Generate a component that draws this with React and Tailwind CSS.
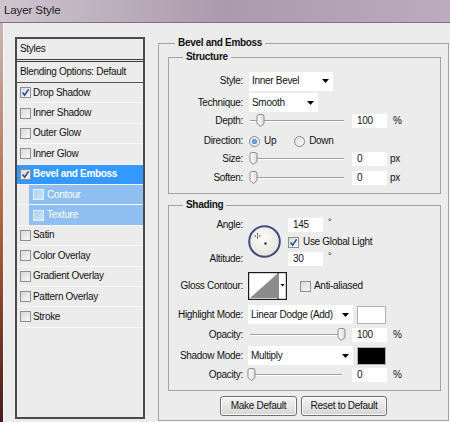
import React from "react";

const FONT = "font-['Liberation_Sans',Arial,sans-serif]";

function Check({ checked, tone = "normal" }) {
  const box =
    tone === "sub"
      ? "border-[#e8f2fd] bg-linear-to-br from-[#a9d0f5] to-[#cfe5fa]"
      : "border-[#8e8f8f] bg-linear-to-br from-[#d9d9d9] to-[#f7f7f7]";
  return (
    <span className={`w-[11px] h-[11px] border ${box} flex items-center justify-center shrink-0`}>
      {checked && (
        <svg viewBox="0 0 9 9" className="w-[9px] h-[9px]">
          <path d="M1.6 4.6 L3.6 7.2 L7.6 1.4" stroke="#2c4a9c" strokeWidth="1.6" fill="none" />
        </svg>
      )}
    </span>
  );
}

function Arrow() {
  return (
    <svg viewBox="0 0 7 4" className="w-[7px] h-[4px] shrink-0">
      <path d="M0 0 H7 L3.5 4 Z" fill="#000" />
    </svg>
  );
}

function Dropdown({ text, w }) {
  return (
    <div className={`${w} h-[19px] bg-white flex items-center justify-between pl-[3px] pr-[4px]`}>
      <span>{text}</span>
      <Arrow />
    </div>
  );
}

function Thumb() {
  return (
    <svg viewBox="0 0 9 13" className="w-[9px] h-[13px]">
      <defs>
        <linearGradient id="tg" x1="0" x2="1">
          <stop offset="0" stopColor="#ffffff" />
          <stop offset="1" stopColor="#dcdcdc" />
        </linearGradient>
      </defs>
      <path d="M1 2.5 Q1 0.5 3 0.5 H6 Q8 0.5 8 2.5 V9.5 L4.5 12.5 L1 9.5 Z" fill="url(#tg)" stroke="#8a8a8a" strokeWidth="1" />
    </svg>
  );
}

function Slider({ pos }) {
  return (
    <div className="relative w-[95px] h-[14px]">
      <div className="absolute left-[1px] right-0 top-[6px] h-[2px] border-t border-[#9e9e9e] border-b border-b-white bg-[#d8d8d8]" />
      <div className="absolute top-[0px]" style={{ left: pos }}>
        <Thumb />
      </div>
    </div>
  );
}

function NumInput({ v }) {
  return (
    <div className="w-[35px] h-[14px] bg-white flex items-center pl-[5px] text-[10px]">{v}</div>
  );
}

function Radio({ on }) {
  return (
    <span className="w-[11px] h-[11px] rounded-full border border-[#8a8a8a] bg-linear-to-br from-[#dedede] to-[#fafafa] flex items-center justify-center shrink-0">
      {on && <span className="w-[5px] h-[5px] rounded-full bg-radial from-[#7cc4f5] to-[#1f5fa8]" />}
    </span>
  );
}

function Label({ children }) {
  return <span className="w-[74px] text-right shrink-0">{children}</span>;
}

function Button({ children, w }) {
  return (
    <div className={`${w} h-[20px] rounded-[3px] border border-[#707070] bg-linear-to-b from-[#f4f4f4] via-[#e6e6e6] to-[#d4d4d4] shadow-[inset_0_0_0_1px_#fcfcfc] flex items-center justify-center`}>
      {children}
    </div>
  );
}

const items = [
  { t: "Drop Shadow", c: true },
  { t: "Inner Shadow" },
  { t: "Outer Glow" },
  { t: "Inner Glow" },
  { t: "Bevel and Emboss", c: true, sel: true },
  { t: "Contour", sub: true },
  { t: "Texture", sub: true },
  { t: "Satin" },
  { t: "Color Overlay" },
  { t: "Gradient Overlay" },
  { t: "Pattern Overlay" },
  { t: "Stroke" },
];

function StyleList() {
  return (
    <div className="ml-[11px] w-[130px] h-[382px] border-2 border-[#4b4b4b] bg-[#ececec] flex flex-col shrink-0">
      <div className="h-[23px] flex items-center pl-[3px] border-b-[3px] border-double border-[#3a3a3a]">Styles</div>
      <div className="h-[21px] flex items-center pl-[3px] border-b border-[#555]">Blending Options: Default</div>
      {items.map((it) =>
        it.sub ? (
          <div key={it.t} className="h-[20.4px] flex border-b border-[#f8f8f8]">
            <div className="w-[12px] shrink-0" />
            <div className="flex-1 bg-[#8fbff0] flex items-center pl-[4px] gap-[3px] text-white">
              <Check tone="sub" />
              <span>{it.t}</span>
            </div>
          </div>
        ) : (
          <div
            key={it.t}
            className={`h-[20.4px] flex items-center pl-[3px] gap-[2px] border-b ${
              it.sel ? "bg-[#3399ff] text-white font-bold border-[#f8f8f8]" : "border-[#f8f8f8]"
            }`}
          >
            <Check checked={it.c} />
            <span>{it.t}</span>
          </div>
        )
      )}
    </div>
  );
}

function AngleDial() {
  return (
    <svg viewBox="0 0 33 33" className="w-[33px] h-[33px]">
      <defs>
        <radialGradient id="dg" cx="0.45" cy="0.4" r="0.6">
          <stop offset="0" stopColor="#fdfcf9" />
          <stop offset="1" stopColor="#e7e4dc" />
        </radialGradient>
      </defs>
      <circle cx="16.5" cy="16.5" r="15.3" fill="url(#dg)" stroke="#3f4d7f" strokeWidth="2" />
      <g fill="#333">
        <rect x="9" y="8" width="1" height="1.5" />
        <rect x="9" y="12" width="1" height="1.5" />
        <rect x="6.5" y="10.5" width="1.5" height="1" />
        <rect x="11" y="10.5" width="1.5" height="1" />
        <rect x="9" y="10.5" width="1" height="1" />
      </g>
      <rect x="16.5" y="17.5" width="2" height="2" fill="#000" />
    </svg>
  );
}

function GlossContour() {
  return (
    <svg viewBox="0 0 39 28" className="w-[39px] h-[28px]">
      <rect x="0.5" y="0.5" width="38" height="27" fill="#fff" stroke="#1a1a1a" strokeWidth="1.4" />
      <polygon points="2,26 29,2 29,26" fill="#8c8c8c" />
      <line x1="30" y1="0.5" x2="30" y2="27.5" stroke="#1a1a1a" strokeWidth="1" />
      <path d="M32.5 12 H36.5 L34.5 14.5 Z" fill="#000" />
    </svg>
  );
}

export default function App() {
  return (
    <div className={`w-[450px] h-[422px] overflow-hidden flex flex-col text-[10px] leading-none tracking-[-0.3px] text-[#111] ${FONT}`}>
      {/* title bar */}
      <div className="h-[23px] shrink-0 bg-linear-to-r from-[#cfc5cf] via-[#ab99ad] to-[#bcaabe] border-b border-[#7e7280] flex items-center pl-[4px]">
        <span className="text-[11.5px] text-[#1b1b1b] tracking-[-0.1px]">Layer Style</span>
      </div>
      <div className="flex flex-1 min-h-0">
        <div className="w-[3px] shrink-0 bg-linear-to-b from-[#c8b6b6] via-[#b0623c] to-[#4a1b1b]" />
        <div className="flex-1 bg-[#ececec] flex pt-[14px] border-l border-[#f7f7f7]">
          <StyleList />
          <fieldset className="ml-[13px] -mt-[1px] w-[291px] self-start border border-[#a3a3a3] px-0 pb-[4px] shadow-[1px_1px_0_#fafafa]">
            <legend className="ml-[16px] px-[3px] h-[14px] leading-[14px] font-bold text-[10px]">Bevel and Emboss</legend>
            {/* Structure */}
            <fieldset className="ml-[9px] w-[273px] border border-[#a3a3a3] pt-[7px] pb-[6px]">
              <legend className="ml-[14px] px-[3px] h-[14px] leading-[14px] font-bold">Structure</legend>
              <div className="flex items-center h-[20px]">
                <Label>Style:</Label>
                <div className="ml-[6px]">
                  <Dropdown text="Inner Bevel" w="w-[84px]" />
                </div>
              </div>
              <div className="flex items-center h-[19px] mt-[2px]">
                <Label>Technique:</Label>
                <div className="ml-[6px]">
                  <Dropdown text="Smooth" w="w-[69px]" />
                </div>
              </div>
              <div className="flex items-center h-[18px]">
                <Label>Depth:</Label>
                <div className="ml-[6px]">
                  <Slider pos={7} />
                </div>
                <div className="ml-[8px]">
                  <NumInput v="100" />
                </div>
                <span className="ml-[6px]">%</span>
              </div>
              <div className="flex items-center h-[18px] mt-[2px]">
                <Label>Direction:</Label>
                <div className="ml-[6px] flex items-center">
                  <Radio on />
                  <span className="ml-[4px]">Up</span>
                  <span className="ml-[18px]">
                    <Radio />
                  </span>
                  <span className="ml-[4px]">Down</span>
                </div>
              </div>
              <div className="flex items-center h-[18px]">
                <Label>Size:</Label>
                <div className="ml-[6px]">
                  <Slider pos={0} />
                </div>
                <div className="ml-[8px]">
                  <NumInput v="0" />
                </div>
                <span className="ml-[3px]">px</span>
              </div>
              <div className="flex items-center h-[18px] mt-[1px]">
                <Label>Soften:</Label>
                <div className="ml-[6px]">
                  <Slider pos={0} />
                </div>
                <div className="ml-[8px]">
                  <NumInput v="0" />
                </div>
                <span className="ml-[3px]">px</span>
              </div>
            </fieldset>
            {/* Shading */}
            <fieldset className="ml-[9px] mt-[4px] w-[273px] border border-[#a3a3a3] pt-[6px] pb-[6px]">
              <legend className="ml-[14px] px-[3px] h-[14px] leading-[14px] font-bold">Shading</legend>
              <div className="grid grid-cols-[74px_35px_1fr] grid-rows-[14px_20px_14px] gap-x-[5px]">
                <span className="text-right self-center">Angle:</span>
                <div className="row-span-3 mt-[7px]">
                  <AngleDial />
                </div>
                <div className="flex items-center">
                  <NumInput v="145" />
                  <span className="ml-[5px] self-start text-[9px]">°</span>
                </div>
                <span />
                <div className="flex items-center">
                  <Check checked />
                  <span className="ml-[4px]">Use Global Light</span>
                </div>
                <span className="text-right self-center">Altitude:</span>
                <div className="flex items-center">
                  <NumInput v="30" />
                  <span className="ml-[5px] self-start text-[9px]">°</span>
                </div>
              </div>
              <div className="flex items-center h-[28px] mt-[6px]">
                <Label>Gloss Contour:</Label>
                <div className="ml-[5px]">
                  <GlossContour />
                </div>
                <span className="ml-[13px]">
                  <Check />
                </span>
                <span className="ml-[3px]">Anti-aliased</span>
              </div>
              <div className="flex items-center h-[19px] mt-[5px]">
                <Label>Highlight Mode:</Label>
                <div className="ml-[5px]">
                  <Dropdown text="Linear Dodge (Add)" w="w-[105px]" />
                </div>
                <div className="ml-[4px] w-[29px] h-[18px] bg-white border border-[#b0b0b0]" />
              </div>
              <div className="flex items-center h-[18px] mt-[2px]">
                <Label>Opacity:</Label>
                <div className="ml-[6px]">
                  <Slider pos={88} />
                </div>
                <div className="ml-[8px]">
                  <NumInput v="100" />
                </div>
                <span className="ml-[6px]">%</span>
              </div>
              <div className="flex items-center h-[19px] mt-[2px]">
                <Label>Shadow Mode:</Label>
                <div className="ml-[5px]">
                  <Dropdown text="Multiply" w="w-[105px]" />
                </div>
                <div className="ml-[4px] w-[29px] h-[18px] bg-black border border-[#b0b0b0]" />
              </div>
              <div className="flex items-center h-[18px] mt-[1px]">
                <Label>Opacity:</Label>
                <div className="ml-[4px]">
                  <Slider pos={0} />
                </div>
                <div className="ml-[10px]">
                  <NumInput v="0" />
                </div>
                <span className="ml-[6px]">%</span>
              </div>
            </fieldset>
            <div className="flex justify-center gap-[4px] mt-[5px]">
              <Button w="w-[77px]">Make Default</Button>
              <Button w="w-[86px]">Reset to Default</Button>
            </div>
          </fieldset>
        </div>
      </div>
    </div>
  );
}
